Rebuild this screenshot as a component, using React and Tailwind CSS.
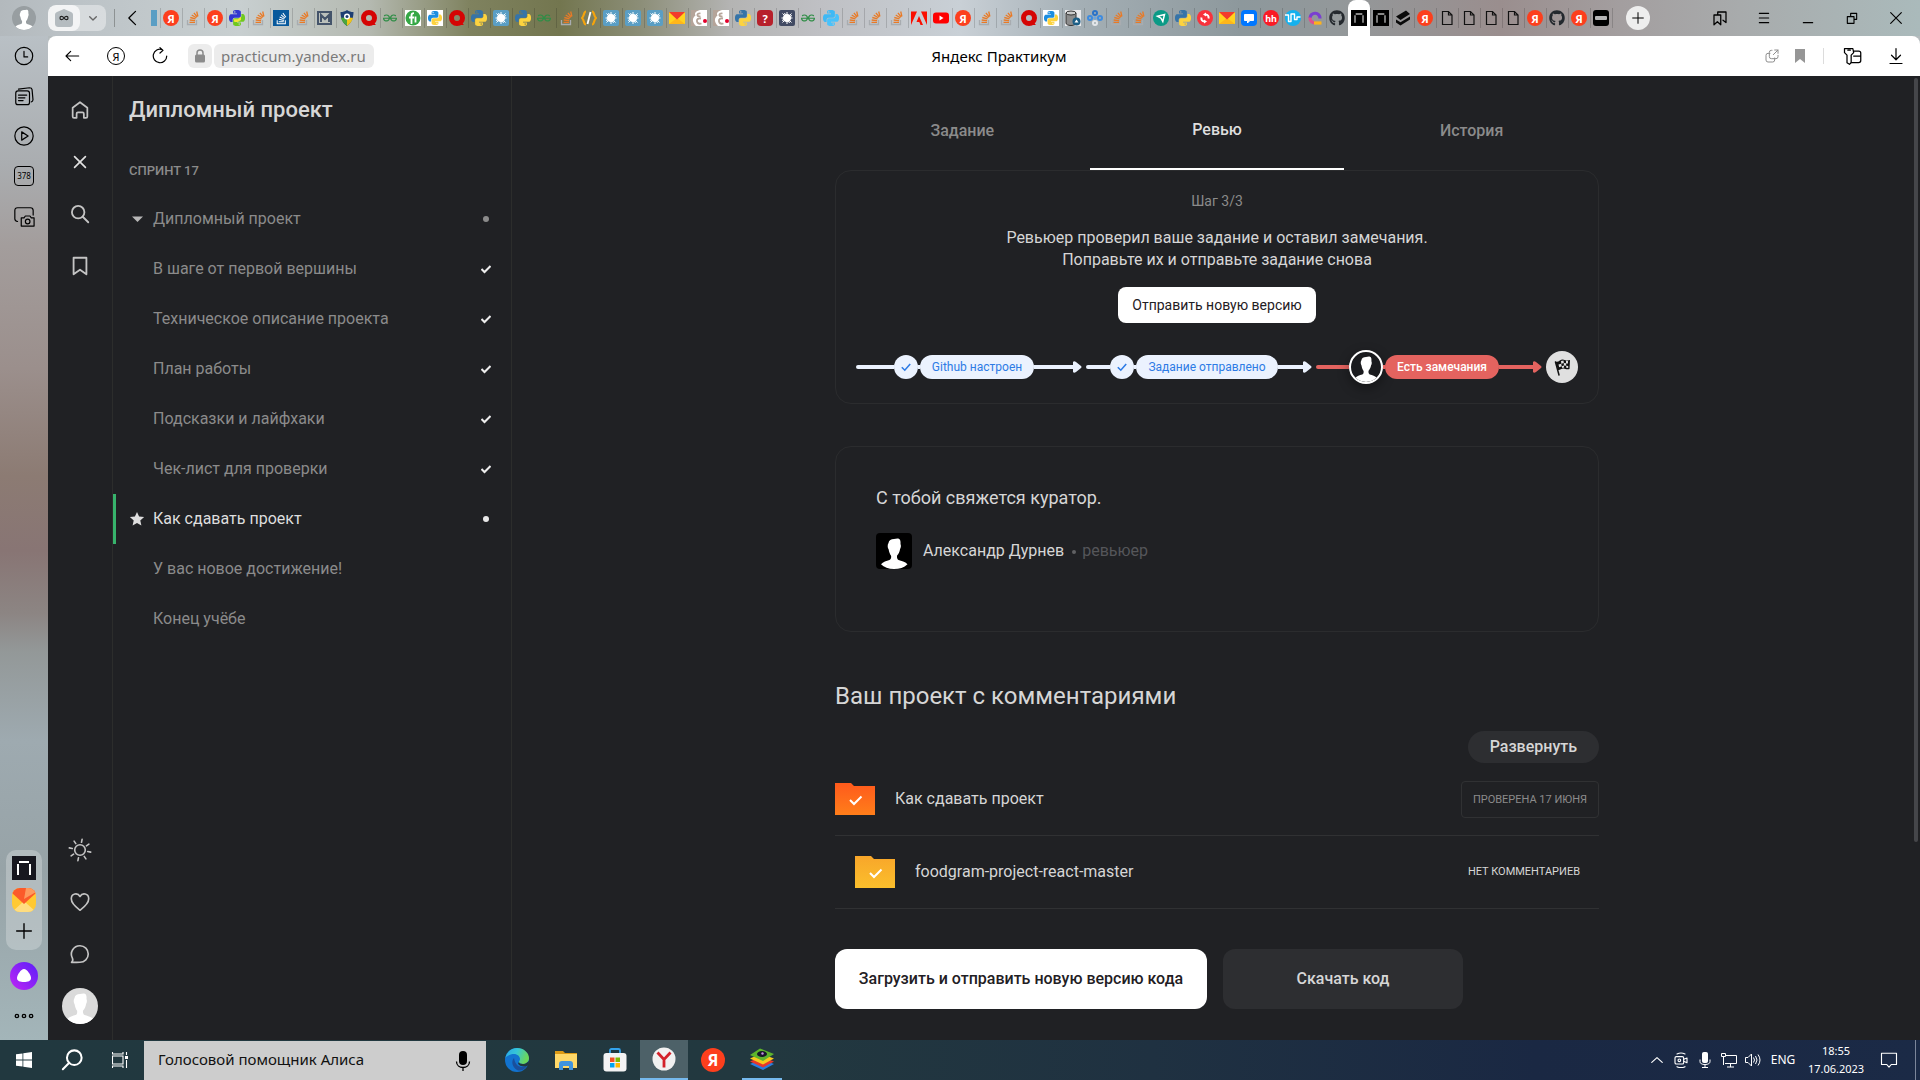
import React from "react";
import { FaGithub, FaStackOverflow } from "react-icons/fa";
import { SiGeeksforgeeks } from "react-icons/si";

const UI = "font-['Noto_Sans','Open_Sans',sans-serif]";
const PAGE = "font-['Roboto','Noto_Sans',sans-serif]";

const PY_TOP =
  "M14.25.18l.9.2.73.26.59.3.45.32.34.34.25.34.16.33.1.3.04.26.02.2-.01.13V8.5l-.05.63-.13.55-.21.46-.26.38-.3.31-.33.25-.35.19-.35.14-.33.1-.3.07-.26.04-.21.02H8.77l-.69.05-.59.14-.5.22-.41.27-.33.32-.27.35-.2.36-.15.37-.1.35-.07.32-.04.27-.02.21v3.06H3.17l-.21-.03-.28-.07-.32-.12-.35-.18-.36-.26-.36-.36-.35-.46-.32-.59-.28-.73-.21-.88-.14-1.05-.05-1.23.06-1.22.16-1.04.24-.87.32-.71.36-.57.4-.44.42-.33.42-.24.4-.16.36-.1.32-.05.24-.01h.16l.06.01h8.16v-.83H6.18l-.01-2.75-.02-.37.05-.34.11-.31.17-.28.25-.26.31-.23.38-.2.44-.18.51-.15.58-.12.64-.1.71-.06.77-.04.84-.02 1.27.05zm-6.3 1.98l-.23.33-.08.41.08.41.23.34.33.22.41.09.41-.09.33-.22.23-.34.08-.41-.08-.41-.23-.33-.33-.22-.41-.09-.41.09z";
const PY_BOTTOM =
  "M21.04 6.11l.28.06.32.12.35.18.36.27.36.35.35.47.32.59.28.73.21.88.14 1.04.05 1.23-.06 1.23-.16 1.04-.24.86-.32.71-.36.57-.4.45-.42.33-.42.24-.4.16-.36.09-.32.05-.24.02-.16-.01h-8.22v.82h5.84l.01 2.76.02.36-.05.34-.11.31-.17.29-.25.25-.31.24-.38.2-.44.17-.51.15-.58.13-.64.09-.71.07-.77.04-.84.01-1.27-.04-1.07-.14-.9-.2-.73-.25-.59-.3-.45-.33-.34-.34-.25-.34-.16-.33-.1-.3-.04-.25-.02-.2.01-.13v-5.34l.05-.64.13-.54.21-.46.26-.38.3-.32.33-.24.35-.2.35-.14.33-.1.3-.06.26-.04.21-.02.13-.01h5.84l.69-.05.59-.14.5-.21.41-.28.33-.32.27-.35.2-.36.15-.36.1-.35.07-.32.04-.28.02-.21V6.07h2.09l.14.01zM14.57 20.36l-.23.33-.08.41.08.41.23.33.33.23.41.08.41-.08.33-.23.23-.33.08-.41-.08-.41-.23-.33-.33-.23-.41-.08-.41.08z";

function Python({ a = "#3674a8", b = "#fdd33f", white }) {
  return (
    <svg viewBox="0 0 24 24" className={white ? "size-4 bg-white p-px" : "size-4"}>
      <path d={PY_TOP} fill={a} />
      <path d={PY_BOTTOM} fill={b} />
    </svg>
  );
}

function Splat({ bg }) {
  return (
    <svg viewBox="0 0 16 16" className="size-4">
      <rect width="16" height="16" rx="2" fill={bg} />
      <circle cx="8" cy="8" r="4" fill="#fff" />
      <path d="M8 2v12M2.500 8h11M3.500 3.500l9 9M12.500 3.500l-9 9M5.500 3l5 10M3 10.500l10-5" stroke="#fff" strokeWidth="1" />
    </svg>
  );
}

function Envelope({ className = "size-4" }) {
  return (
    <svg viewBox="0 0 16 16" className={className}>
      <path d="M0 2h16v12H0z" fill="#ffd21f" />
      <path d="M0 14l8-6 8 6z" fill="#ffb61a" />
      <path d="M0 2h16l-8 7.500z" fill="#f33a2c" />
    </svg>
  );
}

function Practicum({ className = "size-4", bg = "#000", line = "#fff" }) {
  return (
    <svg viewBox="0 0 24 24" className={className}>
      <path d="M0 0h24v24H0z" fill={bg} />
      <path d="M7 6h10M6 8v11M18 8v11" stroke={line} strokeWidth="2" fill="none" />
    </svg>
  );
}

function Person({ className, fill = "#fff" }) {
  return (
    <svg viewBox="0 0 36 36" className={className}>
      <path
        d="M12.500 10c.300-2.800 2.600-4 5.500-4 1.500 0 3-.800 4.800-.300 1.700.600 1.900 2.800 1.700 5.300.700 1.500.500 3.500-.400 5-.500 2.800-1.500 5-3 6.500-.400 1.800 0 3.700 1.400 4.500 3 .900 6.500 1.600 9 4.200C28 34.500 23.500 36 18 36S8 34.500 5 31.300c2-2.300 5.500-3.300 8.500-4.200 1.500-.700 1.900-2.500 1.600-4.300-1.300-1.700-2.100-3.900-2.500-6.500-1.100-1.700-1.300-4.300-.100-6.300z"
        fill={fill}
      />
    </svg>
  );
}

function Doc() {
  return (
    <svg viewBox="0 0 16 16" className="size-4" fill="none" stroke="#111" strokeWidth="1.200">
      <path d="M3.500 1.500h6l3.500 3.500v9.500H3.500zM9.500 1.500V5H13" />
    </svg>
  );
}

function Ya({ className = "size-4 text-[11px]" }) {
  return (
    <span className={`${className} flex items-center justify-center rounded-full bg-[#fc3f1d] font-bold leading-none text-white`}>
      Я
    </span>
  );
}

function Favicon({ kind }) {
  switch (kind) {
    case "ya":
      return <Ya />;
    case "so":
      return (
        <svg viewBox="0 0 16 16" className="size-4" fill="none" strokeWidth="1.300">
          <path d="M2.500 10v4.500h9V10" stroke="#a8acb0" />
          <path d="M4.500 12.300h5.500M4.700 10l5.400.600M5.300 7.500l5.200 1.400M6.700 5l4.600 2.700M8.900 2.800l3.300 4.200M11.700 1.500l1.200 5" stroke="#e97a26" />
        </svg>
      );
    case "sob":
      return (
        <span className="flex size-4 items-center justify-center bg-[#07599c] text-white">
          <FaStackOverflow size={13} />
        </span>
      );
    case "pymix":
      return (
        <svg viewBox="0 0 24 24" className="size-4">
          <path d={PY_TOP} fill="#3338cf" />
          <path d={PY_BOTTOM} fill="#6fc91f" />
          <path d="M7 14h6l5-4v5l-5 3H8z" fill="#f2e53a" />
        </svg>
      );
    case "py":
      return <Python />;
    case "pyw":
      return <Python a="#1d8ee0" white />;
    case "pyl":
      return <Python a="#3fb9f5" b="#49c2fb" />;
    case "m":
      return (
        <svg viewBox="0 0 16 16" className="size-4" fill="none" stroke="#44546a" strokeWidth="2">
          <path d="M1 2h13v12H1zM4 12V5l4 4 4-4v7" />
        </svg>
      );
    case "shield":
      return (
        <svg viewBox="0 0 16 16" className="size-4">
          <path d="M8 0c2 1.500 4 2 6.500 2 0 6-2 11-6.500 14C3.500 13 1.500 8 1.500 2 4 2 6 1.500 8 0z" fill="#1e3f73" />
          <path d="M2 8l6-1v9C5 14 3 11 2 8z" fill="#4aa63c" />
          <path d="M14 8L8 7v9c3-2 5-5 6-8z" fill="#f0c419" />
          <circle cx="8" cy="6.500" r="3" fill="#fff" />
          <circle cx="8" cy="6.500" r="1.500" fill="#1e3f73" />
        </svg>
      );
    case "q":
      return (
        <svg viewBox="0 0 16 16" className="size-4">
          <circle cx="8" cy="8" r="5.500" fill="none" stroke="#d50404" strokeWidth="5" />
          <path d="M10 10l5 5h-5z" fill="#d50404" />
        </svg>
      );
    case "gfg":
      return <SiGeeksforgeeks size={14} color="#2f8d46" />;
    case "f":
      return (
        <svg viewBox="0 0 16 16" className="size-4">
          <path d="M0 0h16v16H0z" fill="#fff" />
          <circle cx="8" cy="8" r="7.500" fill="#35a745" />
          <path d="M6.500 14V5.500c0-1.500 1-2.300 2.500-2.300M4 7.500h5M10.500 6.500v6" stroke="#fff" strokeWidth="1.800" fill="none" />
        </svg>
      );
    case "splat":
      return <Splat bg="#5a9ec4" />;
    case "dsplat":
      return <Splat bg="#414a63" />;
    case "braces":
      return (
        <svg viewBox="0 0 16 16" className="size-4" fill="none" strokeWidth="2.200">
          <path d="M5 1.500C2.500 1.500 3.500 6 1 8c2.500 2 1.500 6.500 4 6.500" stroke="#f5a40c" />
          <path d="M11 1.500c2.500 0 1.500 4.500 4 6.500-2.500 2-1.500 6.500-4 6.500" stroke="#f5a40c" />
          <path d="M9.500 2l-3 12" stroke="#fff" strokeWidth="1.800" />
        </svg>
      );
    case "mail":
      return <Envelope />;
    case "beige":
      return (
        <svg viewBox="0 0 16 16" className="size-4">
          <path d="M0 0h16v16H0z" fill="#fff" />
          <path d="M0 0h9C5 1 3 3 4.500 5.500 1 8 1 12 5 16H0z" fill="#b5a499" />
          <path d="M9.500 3.500c-2-.500-3.500.500-3 2 .500 1 2 1 3 .800M10 8.500c-3-.500-4.500 1-4 3s2.500 2.500 4.500 2" stroke="#b5a499" strokeWidth="1.800" fill="none" />
          <circle cx="14" cy="11" r="2" fill="#e2002b" />
        </svg>
      );
    case "quest":
      return (
        <span className="flex size-4 items-center justify-center rounded-sm bg-[#b7202b] text-[11px] font-bold leading-none text-white">?</span>
      );
    case "adobe":
      return (
        <svg viewBox="0 0 16 16" className="size-4" fill="#fa0f00">
          <path d="M0 1.500h6L0 15zM16 1.500h-6L16 15zM8 6l4 9H9.500l-1.200-3H5.500z" />
        </svg>
      );
    case "yt":
      return (
        <svg viewBox="0 0 16 16" className="size-4">
          <rect y="2.500" width="16" height="11" rx="3" fill="#f00" />
          <path d="M6.500 5.500v5l4-2.500z" fill="#fff" />
        </svg>
      );
    case "db":
      return (
        <svg viewBox="0 0 16 16" className="size-4">
          <path d="M0 0h16v16H0z" fill="#e9e9ec" />
          <path d="M1 3v10c0 1.500 2 2.500 5 2.500s5-1 5-2.500V3z" fill="#8c8c8c" stroke="#333" />
          <ellipse cx="6" cy="3" rx="5" ry="2" fill="#ccc" stroke="#333" />
          <circle cx="11.500" cy="11.500" r="4" fill="#1b5e86" />
          <path d="M9.500 12.500l2-3 2 3z" fill="#fff" />
        </svg>
      );
    case "nodes":
      return (
        <svg viewBox="0 0 16 16" className="size-4" fill="none" strokeWidth="2">
          <path d="M8 5v6M5 8h6" stroke="#5f9fe0" strokeWidth="1" />
          <circle cx="8" cy="3" r="2" stroke="#2a72c8" />
          <circle cx="3" cy="8" r="2" stroke="#3d8be0" />
          <circle cx="13" cy="8" r="2" stroke="#3d8be0" />
          <circle cx="8" cy="13" r="2" stroke="#e3e6ea" />
        </svg>
      );
    case "send":
      return (
        <svg viewBox="0 0 16 16" className="size-4">
          <circle cx="8" cy="8" r="8" fill="#0b9a86" />
          <path d="M4.500 6.200l7-1.700-1.700 7-1.800-3.300z" fill="none" stroke="#fff" strokeWidth="1.500" />
        </svg>
      );
    case "sync":
      return (
        <svg viewBox="0 0 16 16" className="size-4">
          <circle cx="8" cy="8" r="8" fill="#f8323c" />
          <path d="M8.500 4.500c2.500 0 3.500 2 3 4M7.500 11.500c-2.500 0-3.500-2-3-4" stroke="#fff" strokeWidth="2" fill="none" />
          <path d="M9 2.500v4l-3-2zM7 9.500v4l3-2z" fill="#fff" />
        </svg>
      );
    case "chat":
      return (
        <svg viewBox="0 0 16 16" className="size-4">
          <rect width="16" height="16" rx="4" fill="#07f" />
          <path d="M3.500 4.500h9v6H9L6.500 13v-2.500h-3z" fill="#fff" stroke="#fff" strokeLinejoin="round" />
        </svg>
      );
    case "hh":
      return (
        <span className="flex size-4 items-center justify-center rounded-full bg-[#fa1a24] text-[9px] font-bold leading-none text-white">hh</span>
      );
    case "wave":
      return (
        <svg viewBox="0 0 16 16" className="size-4">
          <circle cx="8" cy="8" r="8" fill="#14b1ee" />
          <path d="M0 5h3.500v6.500H6V4h3.500v5.500H12V7h3.500" stroke="#fff" strokeWidth="1.400" fill="none" strokeLinejoin="round" />
        </svg>
      );
    case "ring":
      return (
        <svg viewBox="0 0 16 16" className="size-4" fill="none" strokeWidth="3.200">
          <path d="M13 8.500A5 5 0 103 8" stroke="#7a3fd0" />
          <path d="M3 7.500a5 5 0 005 5.500" stroke="#e0508e" />
          <path d="M7 13h7.500" stroke="#ffb21a" />
        </svg>
      );
    case "git":
      return <FaGithub size={16} color="#24292e" />;
    case "pr":
      return <Practicum line="#b5b5b5" />;
    case "layers":
      return (
        <svg viewBox="0 0 16 16" className="size-4">
          <path d="M1 6.500L11 .500 15 4 5.500 10zM1 9.500l4.500 2.700L15 6.500v3L5.500 15.500 1 12.500z" fill="#0a0a0a" />
        </svg>
      );
    case "doc":
      return <Doc />;
    case "bt":
      return (
        <span className="flex size-4 items-center justify-center rounded-[3px] bg-black">
          <span className="h-1 w-3 rounded-[1px] bg-[#b5b5b5]" />
        </span>
      );
    default:
      return null;
  }
}

const TABS =
  "ya so ya pymix so sob so m shield q gfg f pyw q py splat py gfg so braces splat splat splat mail beige beige py quest dsplat gfg pyl so so so adobe yt ya so so q pyw db nodes so so send py sync mail chat hh wave ring git active pr layers ya doc doc doc doc ya git ya bt".split(" ");

function Line({ d, className = "size-6", sw = 1.5, children, fill = "none" }) {
  return (
    <svg viewBox="0 0 24 24" className={className} fill={fill} stroke="currentColor" strokeWidth={sw} strokeLinecap="round" strokeLinejoin="round">
      {d && <path d={d} />}
      {children}
    </svg>
  );
}

function IconButton({ label, className = "", children }) {
  return (
    <button type="button" aria-label={label} className={`flex shrink-0 items-center justify-center ${className}`}>
      {children}
    </button>
  );
}

function TabStrip() {
  return (
    <div className="flex h-9 shrink-0 items-center bg-[linear-gradient(90deg,#b3b9bd_0,#bcc3c7_80px,#c8cfd0_240px,#b4b9b0_370px,#7f825f_470px,#73764f_560px,#8c8e78_640px,#b4b4b3_730px,#bfc0c4_820px,#c9d0d6_960px,#a4afb5_1080px,#8d989c_1240px,#93989a_1340px,#9a8e8e_1500px,#a39e9f_1620px,#a8abac_1740px,#aababb_1920px)]">
      <div className="flex w-12 shrink-0 justify-center">
        <button type="button" aria-label="Профиль" className="size-6 overflow-hidden rounded-full bg-[#989ea1]">
          <Person className="size-6" />
        </button>
      </div>
      <div className="flex h-[26px] w-[58px] shrink-0 overflow-hidden rounded-lg bg-white/40">
        <IconButton label="Группа вкладок" className="w-8 rounded-lg bg-white/70">
          <svg viewBox="0 0 18 18" className="size-[18px]">
            <path d="M9 0l7 3c1 .500 2 1 2 3v8c0 3-1 4-4 4H4c-3 0-4-1-4-4V6c0-2 1-2.500 2-3z" fill="#b5bcc0" />
            <path d="M9 9C7.500 6.800 5 6.800 5 9s2.500 2.200 4 0 4-2.200 4 0-2.500 2.200-4 0z" fill="none" stroke="#222" strokeWidth="1.200" />
          </svg>
        </IconButton>
        <IconButton label="Список групп" className="flex-1 text-[#666]">
          <Line d="M7 10l5 5 5-5" className="size-4" sw={2} />
        </IconButton>
      </div>
      <span className="ml-2 h-[18px] w-px shrink-0 bg-[#8d9293]" />
      <IconButton label="Прокрутить влево" className="mx-1.5 size-6">
        <Line d="M15 4l-8 8 8 8" className="size-5" />
      </IconButton>
      <span className="h-4 w-1.5 shrink-0 bg-[#5a9ec4]" />
      <span className="w-[3px] shrink-0" />
      {TABS.map((kind, i) =>
        kind === "active" ? (
          <button key={i} type="button" aria-label="Яндекс Практикум" className="flex h-9 w-[22px] shrink-0 justify-center rounded-t-lg bg-white pt-2.5">
            <Practicum line="#b5b5b5" />
          </button>
        ) : (
          <button key={i} type="button" aria-label={`Вкладка ${i + 1}`} className="flex h-5 w-[22px] shrink-0 items-center border-l border-black/15 pl-0.5">
            <Favicon kind={kind} />
          </button>
        )
      )}
      <span className="h-5 w-px shrink-0 bg-black/15" />
      <IconButton label="Новая вкладка" className="ml-[13px] size-6 rounded-full bg-[#eeeeee]">
        <Line d="M12 4v16M4 12h16" className="size-4" />
      </IconButton>
      <div className="flex flex-1 justify-end pr-0.5">
        <IconButton label="Закладки" className="w-11">
          <Line d="M4 8h9v13l-4.500-4L4 21zM9 8V4h11v14l-4-3" className="size-[18px]" sw={1.700} />
        </IconButton>
        <IconButton label="Меню" className="w-11">
          <Line d="M5 5h14M5 12h14M5 19h14" className="size-4" sw={1.700} />
        </IconButton>
        <IconButton label="Свернуть" className="w-11">
          <Line d="M5 19h14" className="size-4" sw={1.700} />
        </IconButton>
        <IconButton label="Восстановить" className="w-11">
          <Line d="M5 10h10v10H5zM10 10V5h9v9h-4" className="size-4" sw={1.700} />
        </IconButton>
        <IconButton label="Закрыть" className="w-11">
          <Line d="M4 4l16 16M20 4L4 20" className="size-4" sw={1.700} />
        </IconButton>
      </div>
    </div>
  );
}

function BrowserRail() {
  return (
    <aside className="flex w-12 shrink-0 flex-col items-center bg-[linear-gradient(180deg,#b9c0c5_0,#aaadb0_128px,#a39d9c_210px,#9b8f8c_333px,#8c7b73_440px,#887574_515px,#8c8583_577px,#939898_615px,#9eaab0_705px,#97a3a7_833px,#a3b5b9_1004px)]">
      <IconButton label="История" className="size-10">
        <Line className="size-[22px]" sw={1.300}>
          <circle cx="12" cy="12" r="9.500" />
          <path d="M12 7v6h4" />
        </Line>
      </IconButton>
      <IconButton label="Коллекции" className="size-10">
        <Line className="size-[22px]" sw={1.300}>
          <rect x="3" y="6.500" width="15" height="15" rx="2.500" />
          <path d="M6 11h9M6 14h7M6 17h5M6 4.500L18 3q2.500 0 2.800 2l1 11q0 2-2 2.500" />
        </Line>
      </IconButton>
      <IconButton label="Музыка" className="size-10">
        <Line className="size-[22px]" sw={1.300}>
          <circle cx="12" cy="12" r="10" />
          <path d="M9.500 7.500v9l7-4.500z" />
        </Line>
      </IconButton>
      <button type="button" className="my-2.5 flex h-5 w-5 items-center justify-center rounded border border-black text-[8px] leading-none text-black">
        378
      </button>
      <IconButton label="Скриншот" className="size-10">
        <Line className="size-[22px]" sw={1.300}>
          <path d="M5 18q-3-.500-3-3V6q0-3 3-3h14q3 0 3 3v5" />
          <path d="M9 14h3l1.500-2h5L20 14h3v9H9z" />
          <circle cx="16" cy="18" r="2.500" />
        </Line>
      </IconButton>
      <div className="mt-auto flex w-9 flex-col items-center rounded-[10px] bg-white/25 pt-1.5">
        <button type="button" aria-label="Практикум">
          <Practicum className="size-6" bg="#17171f" />
        </button>
        <button type="button" aria-label="Почта" className="mt-2 size-6 overflow-hidden rounded-lg">
          <svg viewBox="0 0 24 24" className="size-6">
            <path d="M0 0h24v24H0z" fill="#ffc933" />
            <path d="M0 24l12-11 12 11z" fill="#ffdd80" />
            <path d="M0 0h24v5L12 16 0 5z" fill="#fb5a2a" />
            <path d="M14 0h10v4L12 11z" fill="#fd9a5e" />
          </svg>
        </button>
        <IconButton label="Добавить" className="h-[38px] w-9">
          <Line d="M12 4v16M4 12h16" className="size-[22px]" />
        </IconButton>
      </div>
      <IconButton label="Алиса" className="mt-3 size-7 rounded-full bg-[linear-gradient(45deg,#c026f5,#5a1ef8)]">
        <svg viewBox="0 0 16 16" className="size-4">
          <path d="M8 1c3 0 7 6 7 9s-3 4-7 4-7-1-7-4 4-9 7-9z" fill="#fff" />
        </svg>
      </IconButton>
      <IconButton label="Ещё" className="mt-2 h-[42px] w-10 pb-1.5">
        <Line className="size-5" sw={1.600}>
          <circle cx="3.500" cy="12" r="2" />
          <circle cx="12" cy="12" r="2" />
          <circle cx="20.500" cy="12" r="2" />
        </Line>
      </IconButton>
    </aside>
  );
}

function AddressBar() {
  return (
    <div className="shrink-0 bg-[#b4bbbd]">
      <div className="flex h-10 items-center rounded-t-lg bg-white">
        <div className="flex flex-1 items-center">
          <IconButton label="Назад" className="ml-0.5 w-11">
            <Line d="M22 12H3M10 5l-7 7 7 7" className="size-4" sw={1.700} />
          </IconButton>
          <IconButton label="Яндекс" className="w-11">
            <span className="flex size-[18px] items-center justify-center rounded-full border border-black text-[11px] leading-none">Я</span>
          </IconButton>
          <IconButton label="Обновить" className="w-11">
            <Line d="M21 12a9 9 0 11-6-8.500M12 1l4 3.500-4 3.500" className="size-[18px]" sw={1.600} />
          </IconButton>
          <IconButton label="Защита" className="ml-1.5 size-6 rounded-md bg-[#ececec]">
            <svg viewBox="0 0 16 16" className="size-4">
              <path d="M5 7V5a3 3 0 016 0v2" fill="none" stroke="#8b8b8b" strokeWidth="1.500" />
              <rect x="3" y="6.500" width="10" height="8" rx="1.500" fill="#8b8b8b" />
            </svg>
          </IconButton>
          <input
            aria-label="Адрес"
            readOnly
            value="practicum.yandex.ru"
            className="ml-0.5 h-6 w-40 rounded-md bg-[#ececec] px-[7px] text-[15px] text-[#7a7a7a] outline-none"
          />
        </div>
        <p className="pl-8 text-[15px] text-black">Яндекс Практикум</p>
        <div className="flex flex-1 items-center justify-end pr-0.5 text-[#8e8e8e]">
          <IconButton label="Похожие" className="mr-1.5 w-[22px]">
            <Line d="M9 8H6a3 3 0 00-3 3v7a3 3 0 003 3h7a3 3 0 003-3v-3M12 3.500h-1a3 3 0 00-3 3V13a3 3 0 003 3h7a3 3 0 003-3v-2M14 10l7-7M16 3h5v5" className="size-4" />
          </IconButton>
          <IconButton label="В закладки" className="w-[22px]">
            <svg viewBox="0 0 16 16" className="size-4">
              <path d="M3 1h10v14l-5-4-5 4z" fill="#969696" />
            </svg>
          </IconButton>
          <span className="ml-3 h-4 w-px bg-[#dcdcdc]" />
          <IconButton label="Пароли" className="ml-1.5 w-11 text-black">
            <Line className="size-5" sw={1.500}>
              <path d="M3 3h10l1 5-3 3v9l-2 2-3-2v-9L3 8zM7 5h3" />
              <path d="M14 6h6q2.500 0 2.500 2.500v9q0 2.500-2.500 2.500h-9M14 12h8" />
            </Line>
          </IconButton>
          <IconButton label="Загрузки" className="w-11 text-black">
            <Line d="M12 2v15M6 11l6 6 6-6M4 22h16" className="size-[18px]" sw={1.600} />
          </IconButton>
        </div>
      </div>
    </div>
  );
}

function CourseRail() {
  return (
    <nav aria-label="Разделы" className="flex w-16 shrink-0 flex-col items-center pt-2 text-[#c4c4c4]">
      <IconButton label="Главная" className="size-13">
        <Line d="M4 9.500l8-6 8 6V19q0 1.500-1.500 1.500h-2.300V16q0-1.500-1.500-1.500H9.800q-1.500 0-1.500 1.500v4.500H5.500Q4 20.500 4 19z" className="size-[22px]" sw={1.900} />
      </IconButton>
      <IconButton label="Закрыть меню" className="size-13 text-[#e2e2e2]">
        <Line d="M5.500 5.500l13 13M18.500 5.500l-13 13" className="size-5" sw={2} />
      </IconButton>
      <IconButton label="Поиск" className="size-13">
        <Line d="M15 15l6 6" className="size-[22px]" sw={2}>
          <circle cx="10" cy="10" r="6.800" />
        </Line>
      </IconButton>
      <IconButton label="Закладки курса" className="size-13">
        <Line d="M5 3h14v18l-7-5-7 5z" className="size-[22px]" sw={2} />
      </IconButton>
      <IconButton label="Тема" className="mt-auto size-13">
        <Line d="M13.500 4.300l.600-3M18.400 7.800l2.500-1.700M19.700 13.500l3 .600M16.200 18.400l1.700 2.500M10.500 19.700l-.600 3M5.600 16.200l-2.500 1.700M4.300 10.500l-3-.600M7.800 5.600L6.100 3.100" className="size-6" sw={1.600}>
          <circle cx="12" cy="12" r="5.300" />
        </Line>
      </IconButton>
      <IconButton label="Избранное" className="size-13">
        <Line d="M12 21C8 18 2.500 14 2.500 8.500c0-6 7-7 9.500-2.500 2.500-4.500 9.500-3.500 9.500 2.500C21.500 14 16 18 12 21z" className="size-[22px]" sw={1.800} />
      </IconButton>
      <IconButton label="Чат" className="size-13">
        <Line d="M2.800 21.200c1.500-1.500 1.700-3 .900-4.700A9.200 9.200 0 0112 3a9 9 0 010 18c-3 0-5 .200-9.200.200z" className="size-[22px]" sw={1.800} />
      </IconButton>
      <IconButton label="Аккаунт" className="mb-4 mt-2 size-9 overflow-hidden rounded-full bg-[#dadada]">
        <Person className="size-9" />
      </IconButton>
    </nav>
  );
}

const LESSONS = [
  { title: "Дипломный проект", lead: "caret", mark: "dot" },
  { title: "В шаге от первой вершины", mark: "check" },
  { title: "Техническое описание проекта", mark: "check" },
  { title: "План работы", mark: "check" },
  { title: "Подсказки и лайфхаки", mark: "check" },
  { title: "Чек-лист для проверки", mark: "check" },
  { title: "Как сдавать проект", lead: "star", mark: "dot", active: true },
  { title: "У вас новое достижение!" },
  { title: "Конец учёбе" },
];

function CoursePanel() {
  return (
    <aside className="w-[400px] shrink-0 border-x border-[#2c2d2c]">
      <h1 className="px-4 pt-4 text-[22px] font-medium leading-9 text-[#d6d6d6]">Дипломный проект</h1>
      <p className="mb-3 mt-8 px-4 text-[13px] font-medium leading-[22px] text-[#8b8b8b]">СПРИНТ 17</p>
      <ul>
        {LESSONS.map(({ title, lead, mark, active }) => (
          <li key={title} className={active ? "border-l-3 border-[#37b36c] text-[#dedede]" : "border-l-3 border-transparent text-[#8b8b8b]"}>
            <a href="#lesson" className="flex h-[50px] items-center pl-[13px] pr-5">
              <span className="flex w-6 shrink-0">
                {lead === "caret" && (
                  <svg viewBox="0 0 16 16" className="size-4" fill="#b8b8b8"><path d="M3 5.500h11L8.500 11z" /></svg>
                )}
                {lead === "star" && (
                  <svg viewBox="0 0 16 16" className="size-4" fill="#dedede"><path d="M8 1l2.100 4.600 5 .500-3.800 3.300 1.100 5L8 11.900l-4.400 2.500 1.100-5L.900 6.100l5-.500z" /></svg>
                )}
              </span>
              <span className="flex-1 text-base">{title}</span>
              {mark === "dot" && <span className={active ? "mr-0.5 size-1.5 rounded-full bg-[#e8e8e8]" : "mr-0.5 size-1.5 rounded-full bg-[#8b8b8b]"} />}
              {mark === "check" && (
                <svg viewBox="0 0 10 10" className="size-2.5" fill="none" stroke="#eee" strokeWidth="2"><path d="M.500 5l3 3 6-6" /></svg>
              )}
            </a>
          </li>
        ))}
      </ul>
    </aside>
  );
}

function Step({ label, done }) {
  const line = done ? "bg-[#ebf2fe]" : "bg-[#e4635f]";
  return (
    <li className="flex flex-1 items-center">
      <span className={`h-1 flex-1 rounded-l-full ${line}`} />
      {done ? (
        <span className="flex size-6 items-center justify-center rounded-full bg-[#ebf2fe]">
          <svg viewBox="0 0 10 10" className="size-2.5" fill="none" stroke="#2d7be5" strokeWidth="1.600"><path d="M.800 5.200l3 3L9.200 2" /></svg>
        </span>
      ) : (
        <span className="size-[34px] overflow-hidden rounded-full border-2 border-white bg-[#1a1b1e] shadow-[0_4px_12px_rgba(0,0,0,0.4)]">
          <Person className="size-[30px]" />
        </span>
      )}
      <span className={`h-1 w-0.5 ${line}`} />
      <span className={done ? "rounded-full bg-[#ebf2fe] px-3 text-xs leading-6 text-[#2d7be5]" : "rounded-full bg-[#e4635f] px-3 text-xs font-medium leading-6 text-white"}>{label}</span>
      <span className={`h-1 flex-1 ${line}`} />
      <svg viewBox="0 0 10 12" className="h-3 w-2.5" fill={done ? "#ebf2fe" : "#e4635f"}>
        <path d="M1 1q1-1.500 3 0l5 4q1 1 0 2l-5 4q-2 1.500-3 0zM0 4h2v4H0z" />
      </svg>
    </li>
  );
}

function Folder({ from, to, id }) {
  return (
    <svg viewBox="0 0 40 32" className="h-8 w-10 shrink-0">
      <defs>
        <linearGradient id={id} x1="0" y1="0" x2="0" y2="1">
          <stop offset="0" stopColor={from} />
          <stop offset="1" stopColor={to} />
        </linearGradient>
      </defs>
      <path d="M0 0h16l3 3h21v29H0z" fill={`url(#${id})`} />
      <path d="M15 17l4 4 7.500-7.500" fill="none" stroke="#fff" strokeWidth="2" />
    </svg>
  );
}

function Review() {
  return (
    <main className="flex-1 overflow-hidden pl-0.5 pt-3.5">
      <div className="mx-auto max-w-[764px] text-base text-[#d6d6d6]">
        <div role="tablist" className="grid h-20 grid-cols-3 font-medium">
          <button type="button" role="tab" aria-selected="false" className="pt-0.5 text-[#8b8b8b]">Задание</button>
          <button type="button" role="tab" aria-selected="true" className="border-b-2 border-white pt-0.5 text-[#dedede]">Ревью</button>
          <button type="button" role="tab" aria-selected="false" className="pt-0.5 text-[#8b8b8b]">История</button>
        </div>

        <section className="rounded-2xl border border-[#2b2c2e] px-5 pb-[19px] pt-5 text-center">
          <p className="text-sm text-[#8b8b8b]">Шаг 3/3</p>
          <p className="mt-4 leading-[22px]">
            Ревьюер проверил ваше задание и оставил замечания.
            <br />
            Поправьте их и отправьте задание снова
          </p>
          <button type="button" className="mt-4 h-9 rounded-lg bg-white px-3.5 text-sm text-[#1f2024]">Отправить новую версию</button>
          <ol className="mt-[27px] flex items-center gap-1">
            <Step label="Github настроен" done />
            <Step label="Задание отправлено" done />
            <Step label="Есть замечания" />
            <li className="flex size-8 items-center justify-center rounded-full bg-[#e0e0e0]">
              <svg viewBox="0 0 20 20" className="size-5" role="img" aria-label="Финиш">
                <path d="M3.500 5l3.500 13" stroke="#111" strokeWidth="1.500" strokeLinecap="round" />
                <path d="M3.500 4.500c3 1.500 5-2.500 8-1.800 2 .300 3.500 1.300 6.500.300l-.500 9c-3 1-4-.500-6-.500-2.500 0-3.500 2-5.500 1.500z" fill="#111" />
                <path d="M9 4l2.500-.500.300 2.500-2.500.800zM14 3.800l2 .200v2.400l-2-.200zM6.500 7.500l2.700-.700.500 2.400-2.500 1zM11.800 6l2.300.200.100 2.600-2.300-.200zM9.700 9.300l2.200-.700.300 1.900-2 .400zM14.200 8.800l2 .300v1.900l-2-.200z" fill="#e0e0e0" />
              </svg>
            </li>
          </ol>
        </section>

        <section className="mt-[42px] rounded-2xl border border-[#2b2c2e] px-10 pb-[62px] pt-[39px]">
          <h2 className="text-lg leading-6">С тобой свяжется куратор.</h2>
          <div className="mt-[23px] flex items-center">
            <Person className="size-9 rounded bg-black" />
            <span className="ml-[11px]">Александр Дурнев</span>
            <span className="ml-2 mt-0.5 size-1 rounded-full bg-[#606164]" />
            <span className="ml-1.5 text-[#55565a]">ревьюер</span>
          </div>
        </section>

        <h2 className="mt-12 text-2xl">Ваш проект с комментариями</h2>
        <div className="mt-[19px] flex justify-end">
          <button type="button" className="h-8 rounded-full bg-[#2d2e31] px-[22px] font-medium">Развернуть</button>
        </div>
        <ul>
          <li className="flex h-[73px] items-center border-b border-[#303133]">
            <Folder id="folder-project" from="#ff5a1c" to="#ff7e1a" />
            <span className="ml-5 flex-1">Как сдавать проект</span>
            <span className="rounded border border-[#303133] px-[11px] text-[11px] leading-[35px] text-[#8b8b8b]">ПРОВЕРЕНА 17 ИЮНЯ</span>
          </li>
          <li className="flex h-[73px] items-center border-b border-[#303133] pl-5 pr-[19px]">
            <Folder id="folder-master" from="#f8a62a" to="#fbbf2c" />
            <span className="ml-5 flex-1">foodgram-project-react-master</span>
            <span className="text-[11px]">НЕТ КОММЕНТАРИЕВ</span>
          </li>
        </ul>
        <div className="mt-10 flex gap-4">
          <button type="button" className="h-[60px] w-[372px] rounded-xl bg-white font-medium text-[#1f2024]">Загрузить и отправить новую версию кода</button>
          <button type="button" className="h-[60px] w-60 rounded-xl bg-[#2d2e31] font-medium">Скачать код</button>
        </div>
      </div>
    </main>
  );
}

function Taskbar() {
  return (
    <footer className="flex h-10 shrink-0 items-stretch bg-[linear-gradient(90deg,#21383f_0,#22383f_40%,#1f3141_60%,#1a2843_80%,#1b2a46_100%)] text-white">
      <IconButton label="Пуск" className="w-12">
        <svg viewBox="0 0 16 16" className="size-4" fill="#fff">
          <path d="M0 2.300l6.500-.900v6.200H0zM7.300 1.300L16 0v7.600H7.300zM0 8.400h6.500v6.200L0 13.700zM7.300 8.400H16V16l-8.700-1.300z" />
        </svg>
      </IconButton>
      <IconButton label="Поиск Windows" className="w-12">
        <Line d="M9 15l-7 7" className="size-[22px]" sw={2.200}>
          <circle cx="14.500" cy="9.500" r="8" />
        </Line>
      </IconButton>
      <IconButton label="Представление задач" className="w-12">
        <svg viewBox="0 0 16 16" className="size-4" fill="none" stroke="#fff" strokeWidth="1.100">
          <path d="M.500 4h10.500v8H.500zM.500 0v2h10.500V0M.500 16v-2h10.500v2M14.500 0v3M14.500 8v8" />
          <path d="M13 4h3v3h-3z" fill="#fff" stroke="none" />
        </svg>
      </IconButton>
      <div className="mt-px flex w-[342px] items-center bg-[#cdcdcd] pr-3 text-black">
        <input aria-label="Поиск" placeholder="Голосовой помощник Алиса" className="h-full min-w-0 flex-1 bg-transparent pb-[3px] pl-3.5 text-[15px] outline-none placeholder:text-[#111]" />
        <button type="button" aria-label="Голосовой ввод">
          <svg viewBox="0 0 22 22" className="size-[22px]">
            <rect x="7" y="1" width="8" height="14" rx="4" fill="#000" />
            <path d="M4.500 11.500c0 8 13 8 13 0M11 17.500V21" fill="none" stroke="#000" strokeWidth="1.300" />
          </svg>
        </button>
      </div>
      <div className="ml-[7px] flex gap-px">
        <IconButton label="Edge" className="w-12">
          <svg viewBox="0 0 24 24" className="size-6">
            <defs>
              <linearGradient id="edge-top" x1="0" x2="1" y1="0" y2="0.300">
                <stop offset="0" stopColor="#2aa5e6" />
                <stop offset="0.500" stopColor="#35c6d8" />
                <stop offset="1" stopColor="#6bd85a" />
              </linearGradient>
            </defs>
            <circle cx="12" cy="12" r="12" fill="#1273cf" />
            <path d="M.300 10C2 3 7 0 12 0c7 0 12 5 12 10 0 3.500-2.500 6-6 6-2.500 0-4-1-4-2 0-.700 1-1.300 1-3 0-2.500-2.500-5-6-5C5 6 1.500 8 .300 10z" fill="url(#edge-top)" />
            <path d="M9 10c-3 3-2 9 3 12 4 1.500 8-.500 10-4-3 1.500-7 1.500-10-1-2-2-2.500-5-3-7z" fill="#1a4f9c" />
            <path d="M14 14c0 1 1.500 2 4 2 3 0 5-2 5.700-3.500L24 17l-2 1c-3.500 1.300-8 0-9-2.500z" fill="#21373f" />
          </svg>
        </IconButton>
        <IconButton label="Проводник" className="w-12">
          <svg viewBox="0 0 24 20" className="h-5 w-6">
            <path d="M1 1h8l2 2h12v4H1z" fill="#dd9a15" />
            <path d="M1 4h22v14H1z" fill="#ffd868" />
            <path d="M5 20v-6q0-3 3-3h8q3 0 3 3v6h-4v-4H9v4z" fill="#3f93de" />
          </svg>
        </IconButton>
        <IconButton label="Store" className="w-12">
          <svg viewBox="0 0 24 24" className="size-6">
            <path d="M7 6V2.500Q7 1 8.500 1h7Q17 1 17 2.500V6" fill="none" stroke="#33a3ec" strokeWidth="1.800" />
            <rect x=".500" y="5" width="23" height="18.500" rx="3" fill="#f3f3f3" />
            <path d="M7 9.500h4.500V14H7z" fill="#f25022" />
            <path d="M12.500 9.500H17V14h-4.500z" fill="#7fba00" />
            <path d="M7 15h4.500v4.500H7z" fill="#00a4ef" />
            <path d="M12.500 15H17v4.500h-4.500z" fill="#ffb900" />
          </svg>
        </IconButton>
        <IconButton label="Яндекс Браузер" className="w-12 border-b-2 border-[#76b9ed] bg-[#4d6168]">
          <svg viewBox="0 0 24 24" className="size-6">
            <circle cx="12" cy="12" r="11.500" fill="#f1f1f1" />
            <path d="M5.500 5.500l6.500 7 6.500-7M12 12v8.500" fill="none" stroke="#d3222a" strokeWidth="2.800" />
          </svg>
        </IconButton>
        <IconButton label="Яндекс приложение" className="w-12">
          <Ya className="size-6 text-base" />
        </IconButton>
        <IconButton label="BlueStacks" className="ml-1 w-10 border-b-2 border-[#76b9ed]">
          <svg viewBox="0 0 24 24" className="size-6">
            <path d="M0 17l11-5 13 5-11 6z" fill="#2a7de0" />
            <path d="M0 14.500l11-5 13 5-11 6z" fill="#e8372c" />
            <path d="M0 11.500l11-5 13 5-11 6z" fill="#f9c81d" />
            <path d="M0 8l10-6.500L24 7l-11 7z" fill="#5eb52c" />
            <ellipse cx="12" cy="7" rx="5" ry="3" fill="#15182a" />
            <circle cx="12.500" cy="6.500" r="1.200" fill="#c58be0" />
          </svg>
        </IconButton>
      </div>
      <div className="ml-auto flex items-center">
        <IconButton label="Скрытые значки" className="w-6">
          <Line d="M3 16l9-8 9 8" className="size-3.5" sw={2} />
        </IconButton>
        <IconButton label="Камера" className="w-6">
          <Line className="size-4" sw={1.700}>
            <rect x="3" y="7" width="13" height="11" rx="2" />
            <path d="M16 11l5-2v7l-5-2M6 3q6-3 12 0M6 22q6 3 12 0" />
            <circle cx="9.500" cy="12.500" r="2" />
          </Line>
        </IconButton>
        <IconButton label="Микрофон" className="w-6">
          <svg viewBox="0 0 16 16" className="size-4" fill="none" stroke="#fff">
            <rect x="5.500" y=".500" width="5" height="10" rx="1" fill="#fff" />
            <path d="M3 7.500v2q0 3 5 3t5-3v-2M8 13v2.500M5 15.500h6" />
          </svg>
        </IconButton>
        <IconButton label="Сеть" className="w-6">
          <svg viewBox="0 0 16 16" className="size-4" fill="none" stroke="#fff">
            <path d="M4 3.500h11.500v8H4M9.500 11.500V15M6 15h7M.500 1.500h4v3h-4zM2.500 4.500V13" />
          </svg>
        </IconButton>
        <IconButton label="Звук" className="w-6">
          <svg viewBox="0 0 16 16" className="size-4" fill="none" stroke="#fff">
            <path d="M.500 5.500H3L6.500 2v12L3 10.500H.500zM8.500 5.500q2 2.500 0 5M10.500 4q3 4 0 8M13 2.500q4 5.500 0 11" />
          </svg>
        </IconButton>
        <button type="button" className="w-9 text-xs">ENG</button>
        <time dateTime="2023-06-17T18:55" className="w-[70px] text-center text-[11px] leading-[18px]">
          18:55
          <br />
          17.06.2023
        </time>
        <IconButton label="Уведомления" className="w-9">
          <Line d="M2 3h20v15h-7l-3 3.500L9 18H2z" className="size-[18px]" sw={1.500} />
        </IconButton>
        <span className="ml-2 mr-1 h-10 w-px bg-[#7c869a]" />
      </div>
    </footer>
  );
}

export default function App() {
  return (
    <div className={`flex h-screen flex-col overflow-hidden ${UI}`}>
      <TabStrip />
      <div className="flex min-h-0 flex-1">
        <BrowserRail />
        <div className="flex min-w-0 flex-1 flex-col">
          <AddressBar />
          <div className={`relative flex min-h-0 flex-1 bg-[#202124] ${PAGE}`}>
            <CourseRail />
            <CoursePanel />
            <Review />
            <span className="absolute right-0.5 top-0.5 h-[764px] w-1 rounded-full bg-[#45464a]" />
          </div>
        </div>
      </div>
      <Taskbar />
    </div>
  );
}
